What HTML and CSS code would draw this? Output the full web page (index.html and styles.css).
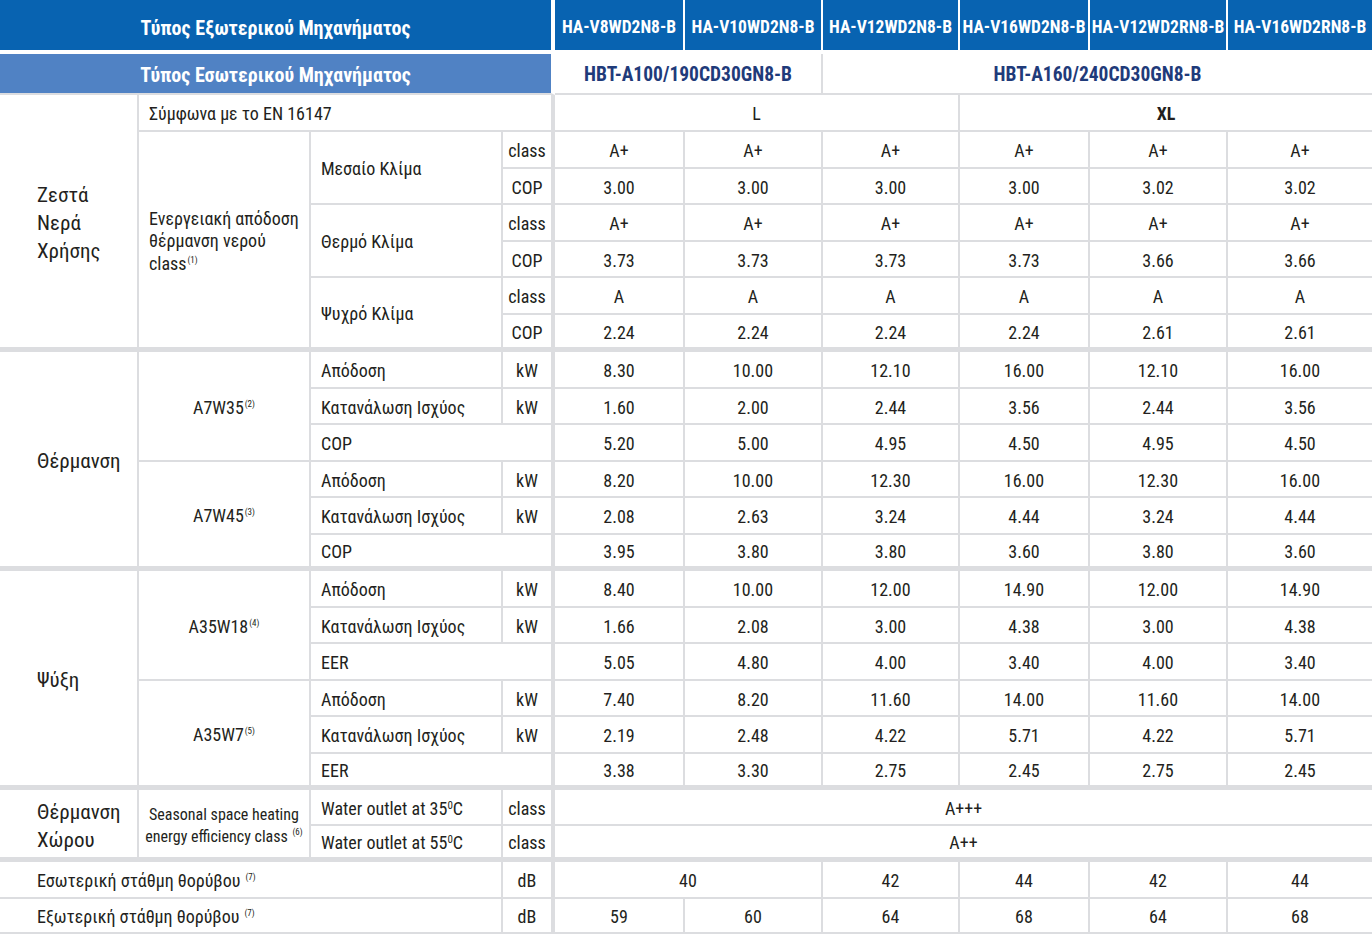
FILE: index.html
```html
<!DOCTYPE html>
<html lang="el">
<head>
<meta charset="utf-8">
<title>Τεχνικά χαρακτηριστικά</title>
<link rel="stylesheet" href="styles.css">
</head>
<body>
<div class="spec">
  <!-- header row 1 -->
  <div class="c h1 hl s4 u"><span>Τύπος Εξωτερικού Μηχανήματος</span></div>
  <div class="c h1"><span>HA-V8WD2N8-B</span></div>
  <div class="c h1"><span>HA-V10WD2N8-B</span></div>
  <div class="c h1"><span>HA-V12WD2N8-B</span></div>
  <div class="c h1"><span>HA-V16WD2N8-B</span></div>
  <div class="c h1"><span>HA-V12WD2RN8-B</span></div>
  <div class="c h1 e"><span>HA-V16WD2RN8-B</span></div>

  <!-- header row 2 -->
  <div class="c h2 s4 u"><span>Τύπος Εσωτερικού Μηχανήματος</span></div>
  <div class="c hbt s2"><span>HBT-A100/190CD30GN8-B</span></div>
  <div class="c hbt s4 e"><span>HBT-A160/240CD30GN8-B</span></div>

  <!-- EN 16147 -->
  <div class="c cat r7 g"><span>Ζεστά<br>Νερά<br>Χρήσης</span></div>
  <div class="c l s3 u"><span>Σύμφωνα με το EN 16147</span></div>
  <div class="c s3"><span>L</span></div>
  <div class="c s3 e b"><span>XL</span></div>

  <div class="c l r6 g"><span>Ενεργειακή απόδοση<br>θέρμανση νερού<br>class<sup>(1)</sup></span></div>
  <div class="c l r2"><span>Μεσαίο Κλίμα</span></div>
  <div class="c u"><span>class</span></div>
  <div class="c">A+</div><div class="c">A+</div><div class="c">A+</div><div class="c">A+</div><div class="c">A+</div><div class="c e">A+</div>
  <div class="c u"><span>COP</span></div>
  <div class="c">3.00</div><div class="c">3.00</div><div class="c">3.00</div><div class="c">3.00</div><div class="c">3.02</div><div class="c e">3.02</div>

  <div class="c l r2"><span>Θερμό Κλίμα</span></div>
  <div class="c u"><span>class</span></div>
  <div class="c">A+</div><div class="c">A+</div><div class="c">A+</div><div class="c">A+</div><div class="c">A+</div><div class="c e">A+</div>
  <div class="c u"><span>COP</span></div>
  <div class="c">3.73</div><div class="c">3.73</div><div class="c">3.73</div><div class="c">3.73</div><div class="c">3.66</div><div class="c e">3.66</div>

  <div class="c l r2 g"><span>Ψυχρό Κλίμα</span></div>
  <div class="c u"><span>class</span></div>
  <div class="c">A</div><div class="c">A</div><div class="c">A</div><div class="c">A</div><div class="c">A</div><div class="c e">A</div>
  <div class="c u g"><span>COP</span></div>
  <div class="c g">2.24</div><div class="c g">2.24</div><div class="c g">2.24</div><div class="c g">2.24</div><div class="c g">2.61</div><div class="c g e">2.61</div>

  <!-- Θέρμανση -->
  <div class="c cat r6 g"><span>Θέρμανση</span></div>
  <div class="c r3"><span>A7W35<sup>(2)</sup></span></div>
  <div class="c l"><span>Απόδοση</span></div>
  <div class="c u"><span>kW</span></div>
  <div class="c">8.30</div><div class="c">10.00</div><div class="c">12.10</div><div class="c">16.00</div><div class="c">12.10</div><div class="c e">16.00</div>
  <div class="c l"><span>Κατανάλωση Ισχύος</span></div>
  <div class="c u"><span>kW</span></div>
  <div class="c">1.60</div><div class="c">2.00</div><div class="c">2.44</div><div class="c">3.56</div><div class="c">2.44</div><div class="c e">3.56</div>
  <div class="c l s2 u"><span>COP</span></div>
  <div class="c">5.20</div><div class="c">5.00</div><div class="c">4.95</div><div class="c">4.50</div><div class="c">4.95</div><div class="c e">4.50</div>

  <div class="c r3 g"><span>A7W45<sup>(3)</sup></span></div>
  <div class="c l"><span>Απόδοση</span></div>
  <div class="c u"><span>kW</span></div>
  <div class="c">8.20</div><div class="c">10.00</div><div class="c">12.30</div><div class="c">16.00</div><div class="c">12.30</div><div class="c e">16.00</div>
  <div class="c l"><span>Κατανάλωση Ισχύος</span></div>
  <div class="c u"><span>kW</span></div>
  <div class="c">2.08</div><div class="c">2.63</div><div class="c">3.24</div><div class="c">4.44</div><div class="c">3.24</div><div class="c e">4.44</div>
  <div class="c l s2 u g"><span>COP</span></div>
  <div class="c g">3.95</div><div class="c g">3.80</div><div class="c g">3.80</div><div class="c g">3.60</div><div class="c g">3.80</div><div class="c g e">3.60</div>

  <!-- Ψύξη -->
  <div class="c cat r6 g"><span>Ψύξη</span></div>
  <div class="c r3"><span>A35W18<sup>(4)</sup></span></div>
  <div class="c l"><span>Απόδοση</span></div>
  <div class="c u"><span>kW</span></div>
  <div class="c">8.40</div><div class="c">10.00</div><div class="c">12.00</div><div class="c">14.90</div><div class="c">12.00</div><div class="c e">14.90</div>
  <div class="c l"><span>Κατανάλωση Ισχύος</span></div>
  <div class="c u"><span>kW</span></div>
  <div class="c">1.66</div><div class="c">2.08</div><div class="c">3.00</div><div class="c">4.38</div><div class="c">3.00</div><div class="c e">4.38</div>
  <div class="c l s2 u"><span>EER</span></div>
  <div class="c">5.05</div><div class="c">4.80</div><div class="c">4.00</div><div class="c">3.40</div><div class="c">4.00</div><div class="c e">3.40</div>

  <div class="c r3 g"><span>A35W7<sup>(5)</sup></span></div>
  <div class="c l"><span>Απόδοση</span></div>
  <div class="c u"><span>kW</span></div>
  <div class="c">7.40</div><div class="c">8.20</div><div class="c">11.60</div><div class="c">14.00</div><div class="c">11.60</div><div class="c e">14.00</div>
  <div class="c l"><span>Κατανάλωση Ισχύος</span></div>
  <div class="c u"><span>kW</span></div>
  <div class="c">2.19</div><div class="c">2.48</div><div class="c">4.22</div><div class="c">5.71</div><div class="c">4.22</div><div class="c e">5.71</div>
  <div class="c l s2 u g"><span>EER</span></div>
  <div class="c g">3.38</div><div class="c g">3.30</div><div class="c g">2.75</div><div class="c g">2.45</div><div class="c g">2.75</div><div class="c g e">2.45</div>

  <!-- Θέρμανση Χώρου -->
  <div class="c cat r2 g"><span>Θέρμανση<br>Χώρου</span></div>
  <div class="c r2 g small"><span>Seasonal space heating<br>energy efficiency class <sup>(6)</sup></span></div>
  <div class="c l"><span>Water outlet at 35<sup class="deg">0</sup>C</span></div>
  <div class="c u"><span>class</span></div>
  <div class="c s6 e"><span>A+++</span></div>
  <div class="c l g"><span>Water outlet at 55<sup class="deg">0</sup>C</span></div>
  <div class="c u g"><span>class</span></div>
  <div class="c s6 e g"><span>A++</span></div>

  <!-- Θόρυβος -->
  <div class="c noise s3"><span>Εσωτερική στάθμη θορύβου <sup>(7)</sup></span></div>
  <div class="c u"><span>dB</span></div>
  <div class="c s2">40</div><div class="c">42</div><div class="c">44</div><div class="c">42</div><div class="c e">44</div>

  <div class="c noise s3"><span>Εξωτερική στάθμη θορύβου <sup>(7)</sup></span></div>
  <div class="c u"><span>dB</span></div>
  <div class="c">59</div><div class="c">60</div><div class="c">64</div><div class="c">68</div><div class="c">64</div><div class="c e">68</div>
</div>
</body>
</html>
```

FILE: styles.css
```css
html, body {
  margin: 0;
  padding: 0;
  background: #ffffff;
  overflow: hidden;
}

.spec {
  display: grid;
  width: 1372px;
  grid-template-columns: 139px 172px 192px 52px 130px 138px 137px 130px 138px 144px;
  grid-template-rows:
    54px 41px 37px
    37px 36px 37px 36px 37px 37px
    37px 36px 37px 36px 37px 36px
    37px 36px 37px 36px 37px 36px
    36px 36px
    37px 35px;
  font-family: "Roboto Condensed", "Liberation Sans Narrow", "DejaVu Sans Condensed", "Liberation Sans", sans-serif;
  font-size: 18px;
  color: #231f20;
}

.c {
  box-sizing: border-box;
  display: flex;
  align-items: center;
  justify-content: center;
  text-align: center;
  line-height: 1.25;
  padding-top: 4px;
  border-right: 2px solid #dcdde0;
  border-bottom: 2px solid #dcdde0;
  white-space: nowrap;
  overflow: hidden;
}

.s2 { grid-column: span 2; }
.s3 { grid-column: span 3; }
.s4 { grid-column: span 4; }
.s6 { grid-column: span 6; }
.r2 { grid-row: span 2; }
.r3 { grid-row: span 3; }
.r6 { grid-row: span 6; }
.r7 { grid-row: span 7; }

.u { border-right-width: 4px; }
.e { border-right-width: 0; }
.g { border-bottom-width: 5px; }
.b { font-weight: bold; }

.l {
  justify-content: flex-start;
  text-align: left;
  padding-left: 10px;
}

.cat {
  justify-content: flex-start;
  text-align: left;
  padding-left: 37px;
  font-size: 21px;
  line-height: 28px;
}

.noise {
  justify-content: flex-start;
  text-align: left;
  padding-left: 37px;
}

.small {
  font-size: 16px;
  line-height: 22px;
}

.h1 {
  background: #0863b1;
  color: #ffffff;
  font-weight: bold;
  font-size: 17.5px;
  padding-top: 6px;
  border-color: #ffffff;
  border-bottom-width: 4px;
}

.h1.hl {
  font-size: 20px;
}

.h2 {
  background: #5082c4;
  color: #ffffff;
  font-weight: bold;
  font-size: 20px;
  border-right-color: #ffffff;
}

.hbt {
  color: #1f3b7a;
  font-weight: bold;
  font-size: 19.5px;
}

sup {
  font-size: 9px;
  line-height: 0;
  vertical-align: 7px;
  margin-left: 1px;
}

sup.deg {
  font-size: 11px;
  vertical-align: 6px;
  margin-left: 0;
}
```
